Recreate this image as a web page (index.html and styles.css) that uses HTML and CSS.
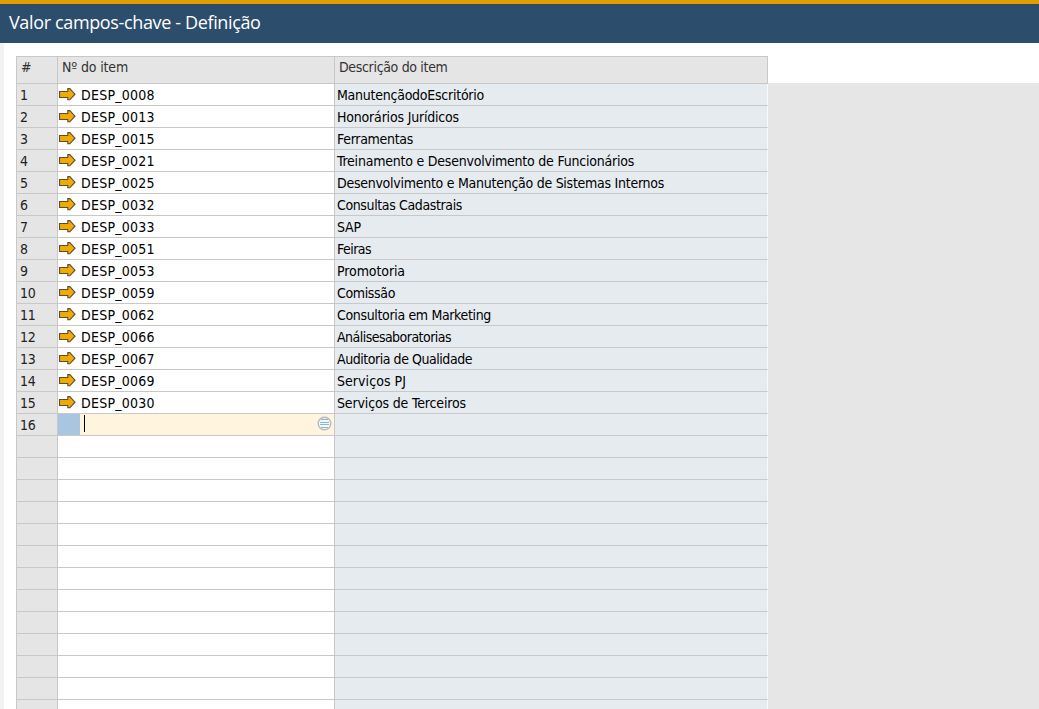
FILE: index.html
```
<!DOCTYPE html>
<html lang="pt-BR">
<head>
<meta charset="utf-8">
<title>Valor campos-chave - Definição</title>
<link rel="stylesheet" href="styles.css">
</head>
<body>
<header class="titlebar">Valor campos-chave - Definição</header>
<main class="content">
<div class="grid">
<div class="head"><div class="num">#</div><div class="item">Nº do item</div><div class="desc">Descrição do item</div></div>
<div class="rows" id="rows"></div>
</div>
<div class="side"></div>
</main>
<script src="rows.js"></script>
</body>
</html>
```
FILE: rows.js
```
const items = [
  ["DESP_0008", "ManutençãodoEscritório", 147],
  ["DESP_0013", "Honorários Jurídicos", 122],
  ["DESP_0015", "Ferramentas", 76],
  ["DESP_0021", "Treinamento e Desenvolvimento de Funcionários", 297],
  ["DESP_0025", "Desenvolvimento e Manutenção de Sistemas Internos", 327],
  ["DESP_0032", "Consultas Cadastrais", 125],
  ["DESP_0033", "SAP", 24],
  ["DESP_0051", "Feiras", 34],
  ["DESP_0053", "Promotoria", 68],
  ["DESP_0059", "Comissão", 58],
  ["DESP_0062", "Consultoria em Marketing", 154],
  ["DESP_0066", "Análisesaboratorias", 114],
  ["DESP_0067", "Auditoria de Qualidade", 135],
  ["DESP_0069", "Serviços PJ", 69],
  ["DESP_0030", "Serviços de Terceiros", 129]
];
const arrow = '<svg class="arrow" width="17" height="13" viewBox="0 0 17 13"><path d="M.5 3.5H8.8V.6H10.8L16 6.2L10.8 11.8H8.8V9.5H.5Z" fill="#f0ab00" stroke="#5e4a38" stroke-width="1.1"/></svg>';
const list = '<svg class="pick" width="15" height="15" viewBox="0 0 15 15"><circle cx="7.5" cy="7.5" r="6.3" fill="#f4f7fa" stroke="#b7b9bb" stroke-width="1.4"/><path d="M4 3.5H11M3 6.5H12M3 8.5H12M4 11.5H11" stroke="#93b3d3"/></svg>';
let html = "";
for (let i = 0; i < 29; i++) {
  const it = items[i];
  const n = i < 16 ? i + 1 : "";
  if (i === 15) {
    html += `<div class="row active"><div class="num">${n}</div><div class="item"><i class="marker"></i><i class="caret"></i>${list}</div><div class="desc"></div></div>`;
  } else {
    html += `<div class="row"><div class="num">${n}</div><div class="item">${it ? arrow + `<span class="code">${it[0]}</span>` : ""}</div><div class="desc">${it ? `<span class="label" data-width="${it[2]}">${it[1]}</span>` : ""}</div></div>`;
  }
}
document.getElementById("rows").innerHTML = html;
document.querySelectorAll(".label").forEach(el => {
  const w = el.getBoundingClientRect().width;
  el.style.letterSpacing = (el.dataset.width - w) / el.textContent.length + "px";
});
```
FILE: styles.css
```
* { box-sizing: border-box; }
body { margin: 0; height: 709px; overflow: hidden; display: flex; flex-direction: column; background: #fff; color: #000; font: 14px/18px "DejaVu Sans Condensed", "DejaVu Sans", sans-serif; font-stretch: condensed; }
.titlebar { flex: none; height: 43px; border-top: 4px solid #e09e00; background: #2c4d6c; color: #fff; padding-left: 9px; font: 18px/37px "Open Sans", sans-serif; letter-spacing: -0.36px; }
.content { flex: 1; min-height: 0; display: flex; border-left: 4px solid #f2f2f2; padding: 13px 0 0 12px; overflow: hidden; }
.grid { width: 752px; flex: none; }
.side { flex: 1; margin-top: 27px; background: #e6e6e6; }
.head, .row { display: grid; grid-template-columns: 41px 277px 434px; }
.head { height: 28px; border-top: 1px solid #c8c8c8; border-bottom: 1px solid #c8c8c8; background: #e5e5e5; color: #333; letter-spacing: -0.33px; line-height: 20px; }
.head > div { border-left: 1px solid #c8c8c8; padding-left: 4px; }
.head .item { letter-spacing: -0.15px; }
.head .desc { border-right: 1px solid #c8c8c8; }
.row { height: 22px; grid-template-rows: 22px; }
.row > div { display: flex; align-items: center; border-left: 1px solid #c8c8c8; border-bottom: 1px solid #c8c8c8; white-space: nowrap; }
.row .num { background: #e5e5e5; color: #222; padding: 0 0 0 3px; letter-spacing: -0.2px; }
.row .desc { background: #e6ebef; border-right: 1px solid #f7f8f9; padding: 0 0 0 2px; }
.arrow { margin: 0 0 1px 1px; }
.code { margin: 0 0 0 5px; letter-spacing: 0.25px; }
.active .item { background: #fff5df; }
.marker { width: 22px; align-self: stretch; background: #a9c5df; }
.caret { width: 1px; height: 17px; margin: 0 auto 2px 4px; background: #000; }
.pick { margin: 0 2px 3px 0; }
```
